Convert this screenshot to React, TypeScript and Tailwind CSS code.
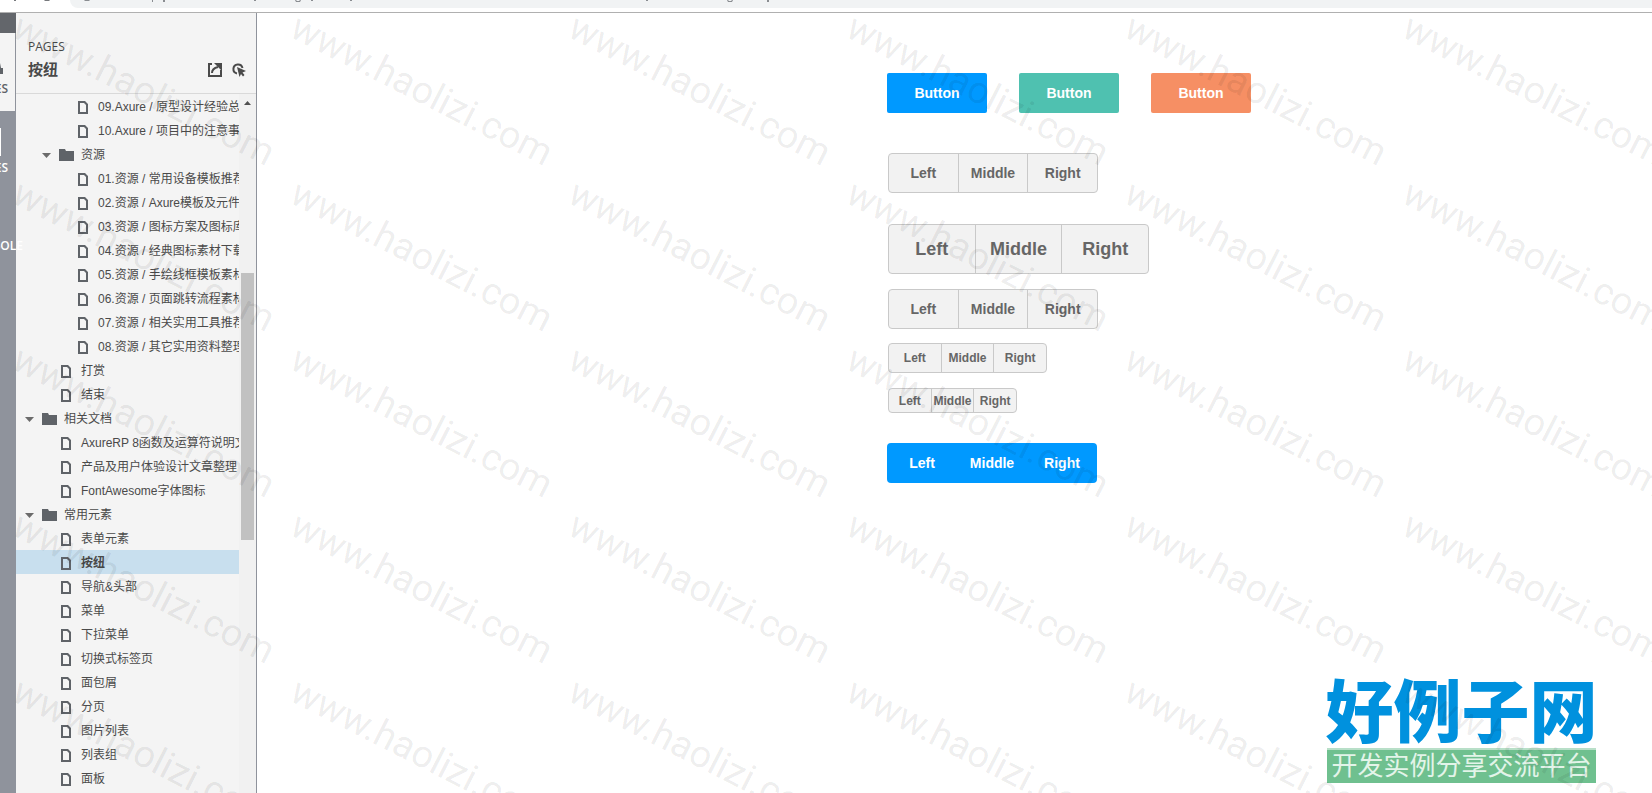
import React from 'react';

interface TreeRow {
  label: string;
  depth: number;
  folder?: boolean;
  active?: boolean;
}

const rows: TreeRow[] = [
  { label: '09.Axure / 原型设计经验总结', depth: 2 },
  { label: '10.Axure / 项目中的注意事项', depth: 2 },
  { label: '资源', depth: 1, folder: true },
  { label: '01.资源 / 常用设备模板推荐', depth: 2 },
  { label: '02.资源 / Axure模板及元件库', depth: 2 },
  { label: '03.资源 / 图标方案及图标库', depth: 2 },
  { label: '04.资源 / 经典图标素材下载', depth: 2 },
  { label: '05.资源 / 手绘线框模板素材', depth: 2 },
  { label: '06.资源 / 页面跳转流程素材', depth: 2 },
  { label: '07.资源 / 相关实用工具推荐', depth: 2 },
  { label: '08.资源 / 其它实用资料整理', depth: 2 },
  { label: '打赏', depth: 1 },
  { label: '结束', depth: 1 },
  { label: '相关文档', depth: 0, folder: true },
  { label: 'AxureRP 8函数及运算符说明文档', depth: 1 },
  { label: '产品及用户体验设计文章整理', depth: 1 },
  { label: 'FontAwesome字体图标', depth: 1 },
  { label: '常用元素', depth: 0, folder: true },
  { label: '表单元素', depth: 1 },
  { label: '按纽', depth: 1, active: true },
  { label: '导航&头部', depth: 1 },
  { label: '菜单', depth: 1 },
  { label: '下拉菜单', depth: 1 },
  { label: '切换式标签页', depth: 1 },
  { label: '面包屑', depth: 1 },
  { label: '分页', depth: 1 },
  { label: '图片列表', depth: 1 },
  { label: '列表组', depth: 1 },
  { label: '面板', depth: 1 },
];

const indents = ['pl-[9px]', 'pl-[26px]', 'pl-[43px]'];

const FileIcon: React.FC = () => (
  <svg width="10" height="13" viewBox="0 0 10 13" className="ml-[2px]">
    <path d="M0 0h7l3 3v10H0zM2 2v9h6V4L6 2z" fill="#5f6368" fillRule="evenodd" />
  </svg>
);

const FolderIcon: React.FC = () => (
  <svg width="15" height="12" viewBox="0 0 15 12">
    <path d="M0 0h6l1 2h8v10H0z" fill="#5f6368" />
  </svg>
);

const PageRow: React.FC<{ row: TreeRow }> = ({ row }) => (
  <li>
    <a
      href="#"
      className={`flex h-6 items-center pt-[2px] text-xs whitespace-nowrap text-[#4a4a4a] ${indents[row.depth]} ${
        row.active ? 'bg-[#c8dfee] font-bold' : ''
      }`}
    >
      <span className="w-[17px] shrink-0">
        {row.folder && (
          <svg width="9" height="5" viewBox="0 0 9 5">
            <path d="M0 0h9L4.500 5z" fill="#6b6b6b" />
          </svg>
        )}
      </span>
      <span className="w-[22px] shrink-0">{row.folder ? <FolderIcon /> : <FileIcon />}</span>
      <span>{row.label}</span>
    </a>
  </li>
);

const BrowserBar: React.FC = () => (
  <div className="flex h-[13px] shrink-0 items-start border-b border-[#b0b0b0] bg-white">
    <svg width="70" height="8" viewBox="0 0 70 8" className="shrink-0" aria-hidden="true">
      <path d="M14 0h2v1h-2zM44 0h6l-1 1h-4z" fill="#77797d" />
    </svg>
    <div className="h-2 flex-1 rounded-bl-2xl bg-[#f1f3f4]">
      <svg width="720" height="3" viewBox="70 0 720 3" className="block" aria-hidden="true">
        <path
          d="M84 0h6l-1 1h-4zM152 0h1v2h-1zM163 0h2v2h-2zM254 0h2v1h-2zM311 0h2v1h-2zM350 0h2v1h-2zM646 0h2v1h-2zM767 0h2v2h-2z"
          fill="#8a8d91"
        />
        <path d="M295 0l1 2h4l1-2h-1l-1 1h-2l-1-1zM727 0l1 2h4l1-2h-1l-1 1h-2l-1-1z" fill="#8a8d91" />
      </svg>
    </div>
  </div>
);

const Rail: React.FC = () => (
  <nav className="relative z-10 w-4 shrink-0 bg-[#8f939c] font-['Open_Sans',sans-serif] text-xs font-semibold text-white">
    <div className="h-5 bg-[#63666b]" />
    <a href="#" className="mr-px flex h-[78px] flex-col items-end bg-[#f4f4f4] pt-[30px] pr-[7px] text-[#5f6368]">
      <svg width="12" height="12" viewBox="0 0 12 12" className="mr-[5px] shrink-0">
        <path d="M0 0h9l1 5h2v6H0z" fill="#5f6368" />
      </svg>
      <span className="pt-[6px]">PAGES</span>
    </a>
    <a href="#" className="flex h-[78px] flex-col items-end pt-[17px] pr-2">
      <svg width="20" height="28" viewBox="0 0 20 28" className="mr-[7px] shrink-0">
        <path d="M0 0h20v28H0z" fill="#fff" />
      </svg>
      <span className="pt-1">NOTES</span>
    </a>
    <a href="#" className="flex h-[78px] items-end justify-end pb-[13px]">
      <span className="-mr-[7px]">CONSOLE</span>
    </a>
  </nav>
);

const Sidebar: React.FC = () => (
  <aside className="flex w-[241px] shrink-0 flex-col border-r border-[#8f939c] bg-[#f4f4f4]">
    <header className="flex h-[81px] shrink-0 items-end justify-between border-b border-[#d9d9d9] pr-[10px] pb-[13px] pl-3">
      <div className="text-[#4a4a4a]">
        <p className="pb-px font-['Open_Sans',sans-serif] text-xs leading-6">PAGES</p>
        <h1 className="text-[15px] leading-5 font-bold">按纽</h1>
      </div>
      <div className="flex gap-[10px] pb-[3px]">
        <button type="button" aria-label="Open page">
          <svg width="14" height="14" viewBox="0 0 14 14" className="block">
            <path d="M4 1H1v12h12V7" fill="none" stroke="#4a4a4a" strokeWidth="2" />
            <path d="M4 10c0-3 2-5 6-6" fill="none" stroke="#4a4a4a" strokeWidth="2" />
            <path d="M6 0h8v8z" fill="#4a4a4a" />
          </svg>
        </button>
        <button type="button" aria-label="Highlight interactions">
          <svg width="14" height="14" viewBox="0 0 14 14" className="block">
            <path d="M5 10.500A4.600 4.600 0 1 1 10.500 5" fill="none" stroke="#4a4a4a" strokeWidth="2" />
            <path d="M5 4l9 4-3.500 1.500L12.500 12 11 13.500 9 11l-1.500 3z" fill="#4a4a4a" />
          </svg>
        </button>
      </div>
    </header>
    <div className="flex min-h-0 flex-1">
      <ul className="min-w-0 flex-1 overflow-hidden">
        {rows.map((row) => (
          <PageRow key={row.label} row={row} />
        ))}
      </ul>
      <div className="w-[17px] shrink-0 bg-[#f1f1f1] pt-[7px]">
        <svg width="7" height="4" viewBox="0 0 7 4" className="ml-[5px] block">
          <path d="M0 4h7L3.500 0z" fill="#505050" />
        </svg>
        <div className="mt-[168px] ml-[2px] h-[267px] w-[13px] bg-[#c1c1c1]" />
      </div>
    </div>
  </aside>
);

const ButtonGroup: React.FC<{ className: string }> = ({ className }) => (
  <div
    className={`flex divide-x divide-[#c9c9c9] rounded-[4px] border border-[#c9c9c9] bg-[#f2f2f2] text-[#666] ${className}`}
  >
    {['Left', 'Middle', 'Right'].map((label) => (
      <button key={label} type="button" className="min-w-0 flex-1 basis-0 font-bold">
        {label}
      </button>
    ))}
  </div>
);

const Watermark: React.FC = () => (
  <div className="pointer-events-none absolute inset-x-0 top-[13px] bottom-0 z-20 overflow-hidden" aria-hidden="true">
    <div className="grid w-[1679px] grid-cols-6 pl-[11px]">
      {Array.from({ length: 30 }, (_, i) => (
        <div key={i} className="h-[166px]">
          <span className="block origin-bottom-left rotate-27 font-['Roboto',sans-serif] text-[38px] leading-5 text-black/8">
            www.haolizi.com
          </span>
        </div>
      ))}
    </div>
  </div>
);

const SiteLogo: React.FC = () => (
  <div className="absolute right-14 bottom-[10px] flex w-[269px] flex-col items-stretch">
    <p className="flex justify-center text-[68px] leading-[70px] font-black whitespace-nowrap text-[#0091de]">
      好例子网
    </p>
    <p className="border-t-2 border-[#b8dfc8] bg-[#6fc08f] text-center text-[26px] leading-[33px] whitespace-nowrap text-[#e3f4e9]">
      开发实例分享交流平台
    </p>
  </div>
);

export default function App() {
  return (
    <div className="relative flex h-screen flex-col overflow-hidden bg-white font-['Liberation_Sans','Noto_Sans_CJK_SC',sans-serif]">
      <BrowserBar />
      <div className="flex min-h-0 flex-1">
        <Rail />
        <Sidebar />
        <main className="flex min-w-0 flex-1 flex-col items-start pt-[60px] pl-[630px] text-sm">
          <div className="flex gap-8 font-bold text-white">
            <button type="button" className="h-10 w-[100px] rounded-[2px] bg-[#0099ff]">
              Button
            </button>
            <button type="button" className="h-10 w-[100px] rounded-[2px] bg-[#4fc1b0]">
              Button
            </button>
            <button type="button" className="h-10 w-[100px] rounded-[2px] bg-[#f68f64]">
              Button
            </button>
          </div>
          <div className="flex flex-col pl-px">
            <ButtonGroup className="mt-10 h-10 w-[210px]" />
            <ButtonGroup className="mt-[31px] h-[50px] w-[261px] text-lg" />
            <ButtonGroup className="mt-[15px] h-10 w-[210px]" />
            <ButtonGroup className="mt-[14px] h-[30px] w-[159px] text-xs" />
            <ButtonGroup className="mt-[15px] h-[25px] w-[129px] text-xs" />
          </div>
          <div className="mt-[30px] flex h-10 w-[210px] rounded-[4px] bg-[#0099ff] text-white">
            {['Left', 'Middle', 'Right'].map((label) => (
              <button key={label} type="button" className="flex-1 basis-0 font-bold">
                {label}
              </button>
            ))}
          </div>
        </main>
      </div>
      <SiteLogo />
      <Watermark />
    </div>
  );
}
